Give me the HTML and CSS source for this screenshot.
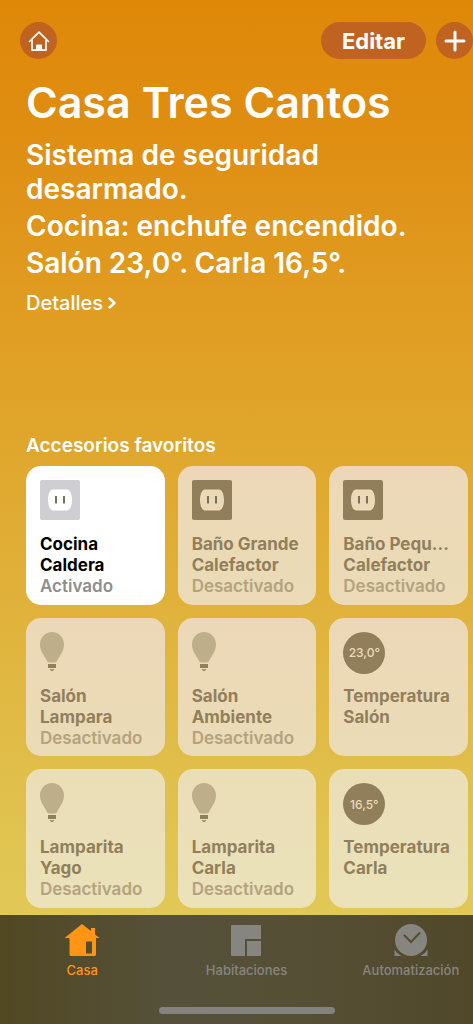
FILE: index.html
```html
<!DOCTYPE html>
<html lang="es">
<head>
<meta charset="utf-8">
<meta name="viewport" content="width=device-width, initial-scale=1">
<title>Casa Tres Cantos</title>
<link rel="stylesheet" href="styles.css">
</head>
<body>
<svg class="sprite" aria-hidden="true">
  <symbol id="outlet" viewBox="0 0 40 40">
    <path class="plate" fill-rule="evenodd" d="M2 0H38Q40 0 40 2V38Q40 40 38 40H2Q0 40 0 38V2Q0 0 2 0ZM12.500 9.500C9.500 10.500 8 15 8 20C8 25 9.500 29.500 12.500 30.500H27.500C30.500 29.500 32 25 32 20C32 15 30.500 10.500 27.500 9.500Z"/>
    <path class="slots" d="M16 16V23.500M24 16V23.500"/>
  </symbol>
  <symbol id="bulb" viewBox="0 0 24 40">
    <path class="glass" d="M12 0C18.500 0 24 5 24 12.500C24 19 20 23 17.500 28Q16.500 30.500 15 30.500H9Q7.500 30.500 6.500 28C4 23 0 19 0 12.500C0 5 5.500 0 12 0Z"/>
    <path class="base" d="M8 32H16V36H8ZM9.500 37.200H14.500Q13.500 39 12 39Q10.500 39 9.500 37.200Z"/>
  </symbol>
</svg>
<div class="app">
  <header class="topbar">
    <button class="round" type="button" aria-label="Casas">
      <svg width="22" height="22" viewBox="0 0 22 22" aria-hidden="true">
        <path d="M1.500 11.500L11 2.200L20.500 11.500M4 10V20.200H18V10" fill="none" stroke="#fff" stroke-width="1.700" stroke-linecap="round" stroke-linejoin="round"/>
        <path d="M8 20V15.500Q8 14.500 9 14.500H13Q14 14.500 14 15.500V20Z" fill="#fff"/>
      </svg>
    </button>
    <div class="actions">
      <button class="edit" type="button">Editar</button>
      <button class="round" type="button" aria-label="Añadir">
        <svg width="22" height="22" viewBox="0 0 22 22" aria-hidden="true"><path d="M11 2V20M2 11H20" stroke="#fff" stroke-width="3" stroke-linecap="round"/></svg>
      </button>
    </div>
  </header>
  <main class="content">
    <h1>Casa Tres Cantos</h1>
    <section class="status">
      <p>Sistema de seguridad<br>desarmado.</p>
      <p>Cocina: enchufe encendido.</p>
      <p>Salón 23,0°. Carla 16,5°.</p>
      <a class="details" href="#detalles">Detalles
        <svg width="8" height="12" viewBox="0 0 8 12" aria-hidden="true"><path d="M1.500 1.500L6.500 6L1.500 10.500" fill="none" stroke="#fff" stroke-width="2.500" stroke-linecap="round" stroke-linejoin="round"/></svg>
      </a>
    </section>
    <h2>Accesorios favoritos</h2>
    <section class="grid">
      <button class="card on" type="button">
        <svg class="outlet" aria-hidden="true"><use href="#outlet"/></svg>
        <span class="name">Cocina</span><span class="name">Caldera</span><span class="state">Activado</span>
      </button>
      <button class="card" type="button">
        <svg class="outlet" aria-hidden="true"><use href="#outlet"/></svg>
        <span class="name">Baño Grande</span><span class="name">Calefactor</span><span class="state">Desactivado</span>
      </button>
      <button class="card" type="button">
        <svg class="outlet" aria-hidden="true"><use href="#outlet"/></svg>
        <span class="name">Baño Pequ...</span><span class="name">Calefactor</span><span class="state">Desactivado</span>
      </button>
      <button class="card" type="button">
        <svg class="bulb" aria-hidden="true"><use href="#bulb"/></svg>
        <span class="name">Salón</span><span class="name">Lampara</span><span class="state">Desactivado</span>
      </button>
      <button class="card" type="button">
        <svg class="bulb" aria-hidden="true"><use href="#bulb"/></svg>
        <span class="name">Salón</span><span class="name">Ambiente</span><span class="state">Desactivado</span>
      </button>
      <button class="card" type="button">
        <span class="reading">23,0°</span>
        <span class="name">Temperatura</span><span class="name">Salón</span>
      </button>
      <button class="card" type="button">
        <svg class="bulb" aria-hidden="true"><use href="#bulb"/></svg>
        <span class="name">Lamparita</span><span class="name">Yago</span><span class="state">Desactivado</span>
      </button>
      <button class="card" type="button">
        <svg class="bulb" aria-hidden="true"><use href="#bulb"/></svg>
        <span class="name">Lamparita</span><span class="name">Carla</span><span class="state">Desactivado</span>
      </button>
      <button class="card" type="button">
        <span class="reading">16,5°</span>
        <span class="name">Temperatura</span><span class="name">Carla</span>
      </button>
    </section>
  </main>
  <nav class="tabbar">
    <div class="tabs">
      <a class="tab active" href="#casa">
        <svg width="36" height="34" viewBox="0 0 36 34" aria-hidden="true"><path fill="currentColor" fill-rule="evenodd" d="M18 1L27 8V5H31V11.500L35.500 15H32V31.500Q32 33 30.500 33H7Q5.500 33 5.500 31.500V15H0.500ZM22 18.500V30.500H28V18.500Z"/></svg>
        <span>Casa</span>
      </a>
      <a class="tab" href="#habitaciones">
        <svg width="36" height="34" viewBox="0 0 36 34" aria-hidden="true"><path fill="currentColor" d="M4 2H32Q33 2 33 3V16H17V33H4Q3 33 3 32V3Q3 2 4 2ZM19 18H33V32Q33 33 32 33H19Z"/></svg>
        <span>Habitaciones</span>
      </a>
      <a class="tab" href="#automatizacion">
        <svg width="36" height="34" viewBox="0 0 36 34" aria-hidden="true"><circle cx="18" cy="17" r="16" fill="currentColor"/><path fill="currentColor" d="M1.500 26.500Q4 31 8.500 33H1.500ZM34.500 26.500Q32 31 27.500 33H34.500Z"/><path d="M11 12L18 19L27 9.500" fill="none" stroke="#544d30" stroke-width="2"/></svg>
        <span>Automatización</span>
      </a>
    </div>
    <div class="indicator"></div>
  </nav>
</div>
</body>
</html>
```
FILE: styles.css
```css
* { box-sizing: border-box; }

body {
  margin: 0;
  font-family: Inter, "Liberation Sans", sans-serif;
  color: #fff;
}

button {
  border: 0;
  padding: 0;
  font: inherit;
  color: inherit;
}

a { color: inherit; text-decoration: none; }

.sprite { display: none; }

.app {
  min-height: 100vh;
  display: flex;
  flex-direction: column;
  background: linear-gradient(#df8808 0, #df8e12 130px, #e0a025 350px, #e0b038 580px, #e0bd48 750px, #e1c957 915px);
}

.topbar {
  display: flex;
  justify-content: space-between;
  padding: 22px 0 0 20px;
}

.actions { display: flex; gap: 10px; }

.round, .edit {
  height: 37px;
  border-radius: 19px;
  background: #c06321;
}

.round {
  width: 37px;
  display: grid;
  place-items: center;
}

.edit {
  padding: 0 21px;
  font-size: 22px;
  font-weight: 700;
}

.content {
  flex: 1;
  padding: 17px 5px 7px 26px;
}

h1 {
  margin: 0;
  font-size: 43px;
  font-weight: 600;
  line-height: 52px;
}

.status {
  padding-top: 10px;
  font-size: 28px;
  font-weight: 600;
  line-height: 34px;
}

.status p { margin: 0 0 3px; }

.details {
  display: flex;
  align-items: center;
  gap: 5px;
  margin-top: 11px;
  font-size: 20px;
  font-weight: 500;
  line-height: 24px;
}

h2 {
  margin: 119px 0 8px;
  font-size: 19px;
  font-weight: 600;
  line-height: 24px;
}

.grid {
  display: grid;
  grid-template-columns: repeat(3, minmax(0, 1fr));
  gap: 13px;
}

.card {
  display: flex;
  flex-direction: column;
  align-items: flex-start;
  aspect-ratio: 1;
  padding: 14px 0 0 14px;
  border-radius: 15px;
  background: linear-gradient(#ecd8b8, #ebdbb6);
  color: #917f5b;
  font-size: 17px;
  font-weight: 700;
  line-height: 21px;
  text-align: left;
  white-space: nowrap;
}

.card:nth-child(n+7) { background: linear-gradient(#eadeb7, #ebe2ba); }

.card.on { background: #fff; color: #000; }

.state { color: #b4a37e; font-weight: 600; }
.on .state { color: #8e8e8e; }

.outlet { width: 40px; height: 40px; margin-bottom: 14px; }
.bulb { width: 24px; height: 40px; margin-bottom: 14px; }

.plate { fill: var(--plate, #917f5b); }
.on .outlet { --plate: #cfced3; }
.slots { fill: none; stroke: #77705c; stroke-width: 2; }
.glass { fill: #beae89; }
.base { fill: #917f5b; }

.reading {
  display: grid;
  place-items: center;
  width: 42px;
  height: 42px;
  margin-bottom: 12px;
  border-radius: 50%;
  background: #917f5b;
  color: #ebdcb8;
  font-size: 12px;
  font-weight: 500;
}

.tabbar {
  display: flex;
  flex-direction: column;
  justify-content: space-between;
  min-height: 109px;
  padding: 8px 0 10px;
  overflow: hidden;
  background: linear-gradient(90deg, #514822, #55503a 35%, #554f35 65%, #51482a);
}

/* The tab row runs past the right edge of the window. */
.tabs {
  display: grid;
  grid-template-columns: repeat(3, 1fr);
  margin-right: -20px;
}

.tab {
  display: flex;
  flex-direction: column;
  align-items: center;
  gap: 5px;
  color: #878580;
  font-size: 13px;
  font-weight: 500;
  line-height: 16px;
}

.tab.active { color: #ff9514; }

.indicator {
  align-self: center;
  width: 176px;
  height: 7px;
  margin-left: 20px;
  border-radius: 4px;
  background: #84827f;
}
```
